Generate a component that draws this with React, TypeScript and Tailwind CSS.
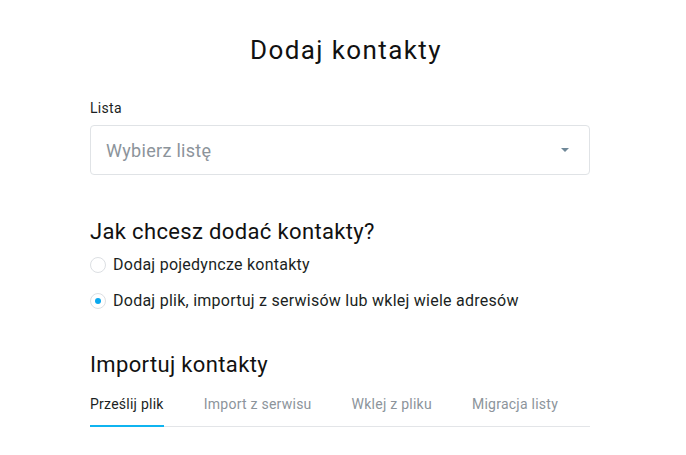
import React, { useState } from 'react';

const tabs = ['Prześlij plik', 'Import z serwisu', 'Wklej z pliku', 'Migracja listy'];

const Radio = ({ checked, label, onClick }: { checked: boolean; label: string; onClick: () => void }) => (
  <label onClick={onClick} className="flex items-center gap-[7px] cursor-pointer">
    <span className="w-4 h-4 rounded-full border border-[#dcdfe3] bg-white flex items-center justify-center">
      {checked && <span className="w-[6px] h-[6px] rounded-full bg-[#0aa8ee]" />}
    </span>
    <span className="text-[16px] text-[#1b1f23] tracking-[0.25px]">{label}</span>
  </label>
);

export default function App() {
  const [mode, setMode] = useState(1);
  const [tab, setTab] = useState(0);

  return (
    <div className="w-[686px] h-[455px] bg-white overflow-hidden" style={{ fontFamily: 'Roboto, "Noto Sans", sans-serif' }}>
      <div className="w-[500px] ml-[90px] flex flex-col">
        <h1 className="text-[26px] tracking-[1.4px] text-[#111] text-center mt-[33px] pl-[12px] leading-[34px]">Dodaj kontakty</h1>

        <div className="mt-[31px] text-[14px] tracking-[0.3px] text-[#1b1f23] leading-[20px]">Lista</div>
        <div className="mt-[7px] h-[50px] border border-[#e0e3e6] rounded-[4px] flex items-center justify-between pl-[15px] pr-[20px]">
          <span className="text-[18px] tracking-[0.3px] text-[#8c949b]">Wybierz listę</span>
          <svg width="8" height="4" viewBox="0 0 8 4"><path d="M0 0h8L4 4z" fill="#6f8898" /></svg>
        </div>

        <h2 className="mt-[42px] text-[22px] tracking-[0.35px] text-[#111] leading-[30px]">Jak chcesz dodać kontakty?</h2>
        <div className="mt-[6px] flex flex-col gap-[12px]">
          <Radio checked={mode === 0} label="Dodaj pojedyncze kontakty" onClick={() => setMode(0)} />
          <Radio checked={mode === 1} label="Dodaj plik, importuj z serwisów lub wklej wiele adresów" onClick={() => setMode(1)} />
        </div>

        <h2 className="mt-[37px] text-[22px] tracking-[0.35px] text-[#111] leading-[30px]">Importuj kontakty</h2>
        <div className="mt-[14px] flex gap-[40px] border-b border-[#e3e5e8]">
          {tabs.map((t, i) => (
            <button
              key={t}
              onClick={() => setTab(i)}
              className={`pb-[11px] text-[14px] tracking-[0.25px] leading-[20px] -mb-px border-b-2 ${
                tab === i ? 'text-[#1b1f23] border-[#0fb4f0]' : 'text-[#8c949b] border-transparent'
              }`}
            >
              {t}
            </button>
          ))}
        </div>
      </div>
    </div>
  );
}
